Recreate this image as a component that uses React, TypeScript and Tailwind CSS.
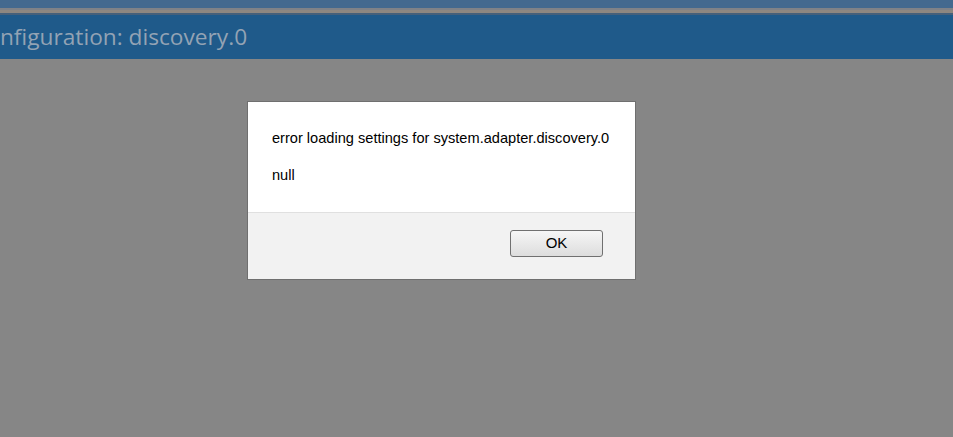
import React from 'react';

const App: React.FC = () => {
  return (
    <div className="relative h-[437px] w-[953px] overflow-hidden bg-[#868686]" style={{ fontFamily: 'Arial, "Liberation Sans", sans-serif' }}>
      {/* dimmed page header */}
      <div className="h-[8px] bg-[#43698f]" />
      <div className="h-[2px] bg-[#7f8288]" />
      <div className="h-[3px] bg-[#8e8780]" />
      <div className="h-[2px] bg-[#46607a]" />
      <div className="flex h-[44px] items-center overflow-hidden bg-[#1f5a8a]">
        <span className="-ml-[28px] whitespace-nowrap text-[22.7px] text-[#93a3b4]" style={{ fontFamily: '"Open Sans", "Noto Sans", sans-serif' }}>
          Configuration: discovery.0
        </span>
      </div>

      {/* modal */}
      <div className="absolute left-[247px] top-[101px] w-[389px] border border-[#6f6f6f] bg-white">
        <div className="px-[24px] pb-[27px] pt-[26px] text-[14.6px] text-black">
          <p className="leading-[20px]">error loading settings for system.adapter.discovery.0</p>
          <p className="mt-[17px] leading-[20px]">null</p>
        </div>
        <div className="flex h-[67px] items-start justify-end border-t border-[#e0e0e0] bg-[#f2f2f2] pr-[32px] pt-[17px]">
          <button className="h-[27px] w-[93px] rounded-[3px] border border-[#707070] bg-gradient-to-b from-[#f6f6f6] to-[#dddddd] text-[15px] text-black">
            OK
          </button>
        </div>
      </div>
    </div>
  );
};

export default App;
